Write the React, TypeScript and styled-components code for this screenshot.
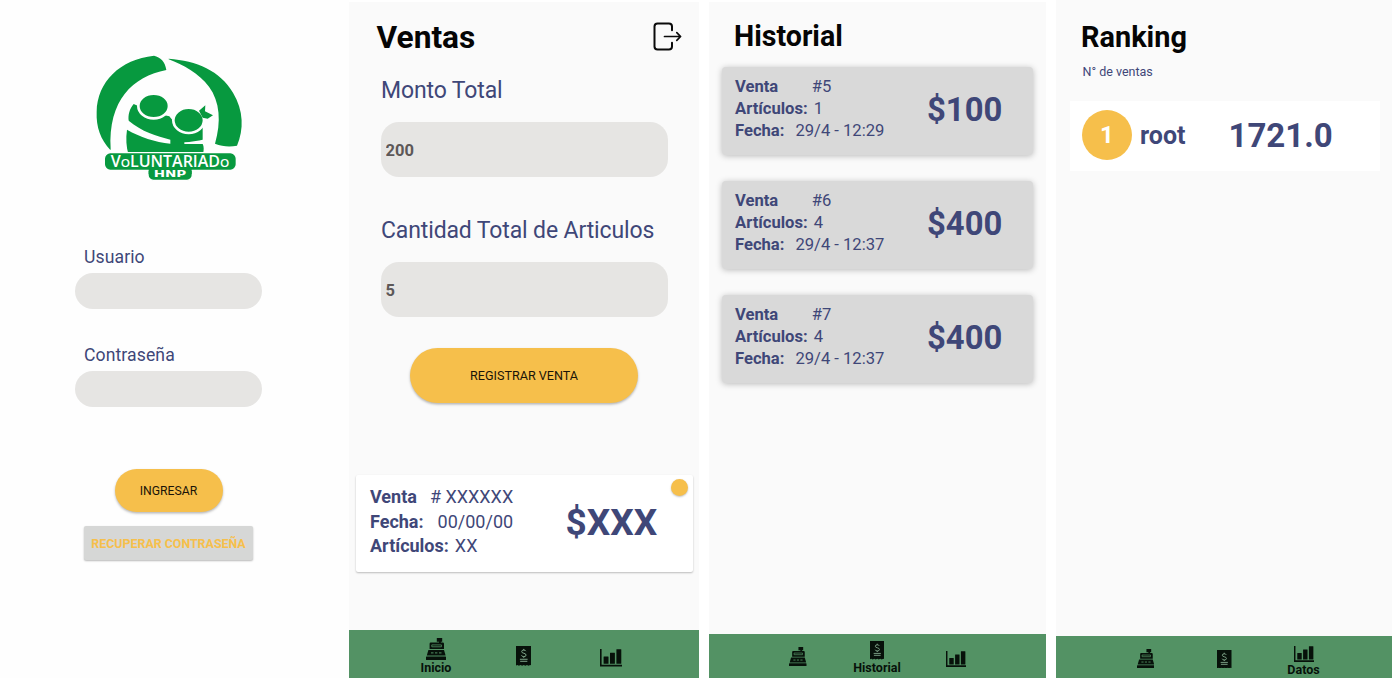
import React from "react";
import styled, { createGlobalStyle } from "styled-components";

const INDIGO = "#3f4778";
const AMBER = "#f6bf4b";
const GREEN = "#539264";

const GlobalStyle = createGlobalStyle`
  * { box-sizing: border-box; }
  body { margin: 0; background: #fff; font-family: Roboto, "Liberation Sans", sans-serif; color: ${INDIGO}; }
  button, input { font-family: inherit; border: 0; padding: 0; margin: 0; outline: 0; }
`;

const Screens = styled.main`
  display: grid;
  grid-template-columns: 339px 350px 337px 336px;
  column-gap: 10px;
  width: 1392px;
  height: 678px;
  overflow: hidden;
`;

const Login = styled.section`
  display: flex;
  flex-direction: column;
  margin-right: -10px;
  padding: 40px 0 0 75px;
  background: #fefefe;
`;

const LogoWrap = styled.div`
  width: 180px;
  height: 150px;
  margin: 0 0 52px 5px;
  svg { display: block; }
`;

const LoginLabel = styled.label`
  height: 30px;
  margin-left: 9px;
  font-size: 17.6px;
  line-height: 30px;
  letter-spacing: 0.1px;
`;

const LoginInput = styled.input`
  width: 187px;
  height: 36px;
  margin: 0.5px 0 31.5px;
  border-radius: 18px;
  background: #e6e5e3;
`;

const PillButton = styled.button<{ $w: number; $h: number; $size: number }>`
  width: ${(p) => p.$w}px;
  height: ${(p) => p.$h}px;
  border-radius: ${(p) => p.$h / 2}px;
  background: ${AMBER};
  color: #1a1408;
  font-size: ${(p) => p.$size}px;
  box-shadow: 0 1.5px 2.5px rgba(0, 0, 0, 0.28);
`;

const LoginActions = styled.div`
  display: flex;
  flex-direction: column;
  align-items: center;
  gap: 14px;
  width: 187px;
  margin-top: 31px;
`;

const RecoverButton = styled.button`
  width: 169px;
  height: 34px;
  border-radius: 2px;
  background: #d6d7d6;
  color: ${AMBER};
  font-size: 12.4px;
  font-weight: 700;
  white-space: nowrap;
  box-shadow: 0 1px 2px rgba(0, 0, 0, 0.28);
`;

const Phone = styled.section<{ $top: number }>`
  display: flex;
  flex-direction: column;
  min-width: 0;
  height: ${(p) => 678 - p.$top}px;
  margin-top: ${(p) => p.$top}px;
  background: #fafafa;
`;

const Body = styled.div`
  flex: 1;
  min-height: 0;
`;

const TitleBar = styled.header<{ $pad: string }>`
  display: flex;
  align-items: flex-start;
  justify-content: space-between;
  padding: ${(p) => p.$pad};
  svg { display: block; margin-top: 3.5px; }
`;

const Title = styled.h1<{ $size: number }>`
  margin: 0;
  color: #050505;
  font-size: ${(p) => p.$size}px;
  font-weight: 700;
  line-height: 40px;
`;

const Form = styled.div`
  display: flex;
  flex-direction: column;
  padding: 18px 31px 0 32px;
`;

const FieldLabel = styled.label`
  font-size: 23px;
  line-height: 30px;
  letter-spacing: -0.13px;
  white-space: nowrap;
`;

const FieldInput = styled.input`
  width: 287px;
  height: 55px;
  margin: 16px 0 39px;
  padding: 1px 0 0 4.5px;
  border-radius: 18px;
  background: #e6e5e3;
  color: #5d5858;
  font-size: 16.5px;
  font-weight: 700;
`;

const RegisterRow = styled.div`
  padding: 0 0 72.5px 29px;
  margin-top: -8.5px;
`;

const Card = styled.article<{ $w: number; $h: number; $bg: string; $pad: string; $radius: number; $shadow: string }>`
  position: relative;
  display: flex;
  width: ${(p) => p.$w}px;
  height: ${(p) => p.$h}px;
  padding: ${(p) => p.$pad};
  border-radius: ${(p) => p.$radius}px;
  background: ${(p) => p.$bg};
  box-shadow: ${(p) => p.$shadow};
`;

const Meta = styled.dl<{ $w: number; $size: number; $line: number }>`
  width: ${(p) => p.$w}px;
  margin: 0;
  font-size: ${(p) => p.$size}px;
  line-height: ${(p) => p.$line}px;
`;

const MetaRow = styled.div<{ $gap: number }>`
  display: flex;
  gap: ${(p) => p.$gap}px;
  white-space: nowrap;
  dt { font-weight: 700; }
  dd { margin: 0; }
`;

const Amount = styled.strong<{ $size: number; $line: number }>`
  font-size: ${(p) => p.$size}px;
  line-height: ${(p) => p.$line}px;
  font-weight: 700;
`;

const Dot = styled.span`
  position: absolute;
  top: 4px;
  right: 5px;
  width: 17px;
  height: 17px;
  border-radius: 50%;
  background: ${AMBER};
  box-shadow: 0 1px 2px rgba(0, 0, 0, 0.25);
`;

const CardInset = styled.div`
  padding-left: 7px;
`;

const SaleList = styled.div`
  display: flex;
  flex-direction: column;
  gap: 26px;
  padding: 10.5px 0 0 12.5px;
`;

const Caption = styled.p`
  margin: 5px 0 19px 26.5px;
  font-size: 12.5px;
  line-height: 20px;
`;

const RankRow = styled.div`
  display: flex;
  align-items: center;
  width: 310.5px;
  height: 70px;
  margin-left: 13.5px;
  padding: 0 0 2px 12.5px;
  background: #fff;
`;

const Medal = styled.span`
  display: flex;
  align-items: center;
  justify-content: center;
  width: 50px;
  height: 50px;
  margin-top: -1px;
  border-radius: 50%;
  background: ${AMBER};
  color: #fff;
  font-size: 24px;
  font-weight: 700;
`;

const RankName = styled.span`
  width: 96.5px;
  padding-left: 8px;
  font-size: 25px;
  font-weight: 700;
`;

const RankTotal = styled.span`
  font-size: 33px;
  line-height: 40px;
  font-weight: 700;
  padding-top: 1px;
`;

const Nav = styled.nav<{ $h: number; $step: number; $shift: number }>`
  display: grid;
  grid-template-columns: repeat(3, ${(p) => p.$step}px);
  justify-content: center;
  height: ${(p) => p.$h}px;
  padding-left: ${(p) => Math.max(p.$shift, 0)}px;
  padding-right: ${(p) => Math.max(-p.$shift, 0)}px;
  background: ${GREEN};
  color: #07110a;
`;

const NavItem = styled.a<{ $pad: number }>`
  display: flex;
  flex-direction: column;
  align-items: center;
  padding-top: ${(p) => p.$pad}px;
  font-size: 12.5px;
  font-weight: 700;
  line-height: 15px;
  svg { display: block; flex: none; }
`;

const Logo = () => (
  <svg width="180" height="150" viewBox="0 0 540 450" fill="#07993f">
    <path d="M91 330C62 298 48 262 50 215C52 125 120 58 222 47C241 51 256 65 259 90C158 110 84 180 92 328Z" />
    <path d="M266 56C350 62 420 92 459 158C491 212 492 268 471 317C450 321 427 320 405 311C424 245 420 185 387 140C356 100 310 75 266 58Z" />
    <path d="M161 192C148 208 144 225 146 242L141 269C137 295 139 320 145 342H369C372 330 372 320 368 312V262L285 250L268 229L250 225L180 200Z" />
    <path d="M130 236L146 242C185 275 230 288 271 299V311C225 306 180 291 141 269L130 268Z" fill="#fefefe" />
    <path d="M313 307C333 306 350 303 375 298V312H313Z" fill="#fefefe" />
    <g stroke="#fefefe" strokeWidth="8">
      <ellipse cx="221" cy="198" rx="46" ry="37" />
      <ellipse cx="326" cy="241" rx="46" ry="38" />
    </g>
    <path d="M357 212L376 196L375 214L399 226L383 236L368 233Z" />
    <g stroke="#fefefe" strokeWidth="4">
      <rect x="204" y="370" width="133" height="51" rx="16" />
      <rect x="73" y="338" width="396" height="53" rx="18" />
    </g>
    <rect x="206" y="372" width="129" height="30" />
    <text x="92" y="381" fill="#fff" fontFamily="Open Sans, sans-serif" fontSize="46" fontWeight="600" textLength="356" lengthAdjust="spacingAndGlyphs">
      V<tspan fontSize="34">O</tspan>LUNTARIAD<tspan fontSize="34">O</tspan>
    </text>
    <text x="221" y="411" fill="#fff" fontFamily="DejaVu Sans, sans-serif" fontSize="27" fontWeight="700" textLength="98" lengthAdjust="spacingAndGlyphs">HNP</text>
  </svg>
);

const ExitIcon = () => (
  <svg width="29" height="29" viewBox="0 0 29 29" fill="none" stroke="#0a0a0a" strokeWidth="2" strokeLinecap="round" strokeLinejoin="round">
    <path d="M19 8.2V4.6Q19 1.5 15.9 1.5H4.6Q1.5 1.5 1.5 4.6V24.4Q1.5 27.5 4.6 27.5H15.9Q19 27.5 19 24.4V20.8" />
    <path d="M11.5 14.5H27.3M23.8 10.7L27.6 14.5L23.8 18.3" strokeWidth="1.7" />
  </svg>
);

const RegisterIcon = ({ size }: { size: number }) => (
  <svg width={size} height={size * 1.1} viewBox="0 0 20 22" fill="currentColor">
    <path d="M10.8 0H16.2V3.8H14.8V4.6H16.8Q18 4.6 18 5.8V11H3.6V5.8Q3.6 4.6 4.8 4.6H13V3.8H10.8Z" />
    <path d="M5.8 6.9H15.4V8.8H5.8Z" fill="none" stroke={GREEN} strokeWidth=".8" />
    <path d="M2.4 12H18L19.6 17.6H.8Z" />
    <path d="M5 14.9H7.5M9 14.9H11.4M13 14.9H15.5" stroke={GREEN} strokeWidth="1" />
    <rect y="18.5" width="20" height="3.5" rx=".6" />
  </svg>
);

const ReceiptIcon = ({ size }: { size: number }) => (
  <svg width={size} height={size * 1.3} viewBox="0 0 16 20.8" fill="currentColor">
    <path d="M0 0H16V20.2L14.5 19.6L13 20.5L11.3 19.6L9.7 20.5L8 19.6L6.3 20.5L4.7 19.6L3 20.5L1.5 19.6L0 20.2Z" />
    <path d="M10.2 5.3Q9.8 4.2 8 4.2Q5.9 4.2 5.9 5.8Q5.9 7.1 8 7.5Q10.4 7.9 10.4 9.4Q10.4 11 8 11Q6 11 5.7 9.6M8 3V4.2M8 11V12.2M4 13.7H12M4.3 15.8H11.7" fill="none" stroke="#8fb89a" strokeWidth=".9" />
  </svg>
);

const ChartIcon = ({ size }: { size: number }) => (
  <svg width={size} height={size * 0.8} viewBox="0 0 22 17.6" fill="currentColor">
    <path d="M0 0H1.6V15.8H22V17.6H0Z" />
    <rect x="3.6" y="7.6" width="4.9" height="7.2" rx=".3" />
    <rect x="10" y="3.8" width="4.9" height="11" rx=".3" />
    <rect x="16.4" y=".2" width="4.9" height="14.6" rx=".3" />
  </svg>
);

const sales = [
  { id: "#5", items: "1", date: "29/4 - 12:29", total: "$100" },
  { id: "#6", items: "4", date: "29/4 - 12:37", total: "$400" },
  { id: "#7", items: "4", date: "29/4 - 12:37", total: "$400" },
];

export default function App() {
  return (
    <>
      <GlobalStyle />
      <Screens>
        <Login>
          <LogoWrap><Logo /></LogoWrap>
          <LoginLabel>Usuario</LoginLabel>
          <LoginInput />
          <LoginLabel>Contraseña</LoginLabel>
          <LoginInput type="password" />
          <LoginActions>
            <PillButton $w={108} $h={43} $size={12.2}>INGRESAR</PillButton>
            <RecoverButton>RECUPERAR CONTRASEÑA</RecoverButton>
          </LoginActions>
        </Login>

        <Phone $top={2}>
          <Body>
            <TitleBar $pad="16px 17px 0 27.5px">
              <Title $size={31.7}>Ventas</Title>
              <ExitIcon />
            </TitleBar>
            <Form>
              <FieldLabel>Monto Total</FieldLabel>
              <FieldInput defaultValue="200" />
              <FieldLabel>Cantidad Total de Articulos</FieldLabel>
              <FieldInput defaultValue="5" />
              <RegisterRow>
                <PillButton $w={228} $h={55} $size={12.6}>REGISTRAR VENTA</PillButton>
              </RegisterRow>
            </Form>
            <CardInset>
              <Card $w={337} $h={97} $bg="#fff" $pad="10px 0 0 14px" $radius={2} $shadow="0 1px 2px rgba(0,0,0,.25)">
                <Meta $w={195.5} $size={18} $line={24.5}>
                  <MetaRow $gap={13}><dt>Venta</dt><dd># XXXXXX</dd></MetaRow>
                  <MetaRow $gap={14}><dt>Fecha:</dt><dd>00/00/00</dd></MetaRow>
                  <MetaRow $gap={6}><dt>Artículos:</dt><dd>XX</dd></MetaRow>
                </Meta>
                <Amount $size={37} $line={75}>$XXX</Amount>
                <Dot />
              </Card>
            </CardInset>
          </Body>
          <Nav $h={48} $step={87.5} $shift={-1}>
            <NavItem $pad={8}><RegisterIcon size={20} />Inicio</NavItem>
            <NavItem $pad={16}><ReceiptIcon size={15.5} /></NavItem>
            <NavItem $pad={19}><ChartIcon size={22} /></NavItem>
          </Nav>
        </Phone>

        <Phone $top={2}>
          <Body>
            <TitleBar $pad="14px 0 0 25px">
              <Title $size={28.6}>Historial</Title>
            </TitleBar>
            <SaleList>
              {sales.map((s) => (
                <Card key={s.id} $w={311.5} $h={88} $bg="#d9d9d9" $pad="9px 0 0 13.5px" $radius={4} $shadow="0 1px 6px rgba(0,0,0,.26)">
                  <Meta $w={192} $size={16.6} $line={22}>
                    <MetaRow $gap={33.5}><dt>Venta</dt><dd>{s.id}</dd></MetaRow>
                    <MetaRow $gap={6}><dt>Artículos:</dt><dd>{s.items}</dd></MetaRow>
                    <MetaRow $gap={11}><dt>Fecha:</dt><dd>{s.date}</dd></MetaRow>
                  </Meta>
                  <Amount $size={32.8} $line={68}>{s.total}</Amount>
                </Card>
              ))}
            </SaleList>
          </Body>
          <Nav $h={44} $step={79} $shift={-1}>
            <NavItem $pad={13}><RegisterIcon size={17.5} /></NavItem>
            <NavItem $pad={7}><ReceiptIcon size={14.5} />Historial</NavItem>
            <NavItem $pad={16.5}><ChartIcon size={20} /></NavItem>
          </Nav>
        </Phone>

        <Phone $top={0}>
          <Body>
            <TitleBar $pad="17px 0 0 25px">
              <Title $size={28.9}>Ranking</Title>
            </TitleBar>
            <Caption>N° de ventas</Caption>
            <RankRow>
              <Medal>1</Medal>
              <RankName>root</RankName>
              <RankTotal>1721.0</RankTotal>
            </RankRow>
          </Body>
          <Nav $h={42} $step={79} $shift={1}>
            <NavItem $pad={13}><RegisterIcon size={17.5} /></NavItem>
            <NavItem $pad={13.5}><ReceiptIcon size={14.5} /></NavItem>
            <NavItem $pad={10}><ChartIcon size={20} />Datos</NavItem>
          </Nav>
        </Phone>
      </Screens>
    </>
  );
}
